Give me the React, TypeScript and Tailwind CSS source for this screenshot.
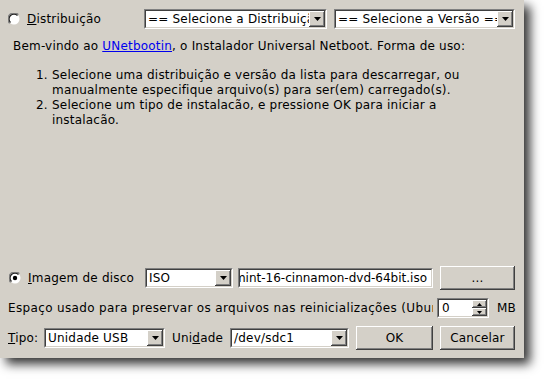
import React from 'react';

const sunken =
  'border border-t-[#808080] border-l-[#808080] border-b-white border-r-white';
const sunkenInner =
  'border border-t-[#404040] border-l-[#404040] border-b-[#d4d0c8] border-r-[#d4d0c8] bg-white';
const raised =
  'bg-[#d4d0c8] shadow-[inset_-1px_-1px_#404040,inset_1px_1px_#ffffff,inset_-2px_-2px_#808080]';

function Radio({ checked }: { checked?: boolean }) {
  return (
    <svg width="12" height="12" viewBox="0 0 12 12" className="shrink-0">
      <circle cx="6" cy="6" r="5.5" fill="#ffffff" />
      <path d="M1.6 10.4A6 6 0 0 1 10.4 1.6" stroke="#808080" strokeWidth="1.2" fill="none" />
      <path d="M2.5 9.5A4.8 4.8 0 0 1 9.5 2.5" stroke="#202020" strokeWidth="1.2" fill="none" />
      {checked && <circle cx="6" cy="6" r="2.2" fill="#000000" />}
    </svg>
  );
}

function Arrow() {
  return (
    <div className={`w-[16px] h-full flex items-center justify-center shrink-0 ${raised}`}>
      <svg width="7" height="4" viewBox="0 0 7 4">
        <path d="M0 0H7L3.5 4Z" fill="#000000" />
      </svg>
    </div>
  );
}

function Combo({ text, className }: { text: string; className: string }) {
  return (
    <div className={`${sunken} h-[20px] shrink-0 ${className}`}>
      <div className={`${sunkenInner} h-full flex items-stretch`}>
        <div className="flex-1 overflow-hidden whitespace-nowrap pl-[2px] leading-[16px]">{text}</div>
        <Arrow />
      </div>
    </div>
  );
}

function Button({ children, className }: { children: React.ReactNode; className: string }) {
  return (
    <div className={`${raised} flex items-center justify-center shrink-0 ${className}`}>{children}</div>
  );
}

export default function App() {
  return (
    <div className="w-[544px] h-[380px] bg-white overflow-hidden">
      <div
        className="w-[524px] h-[358px] bg-[#d4d0c8] shadow-[6px_6px_10px_rgba(0,0,0,0.8)] flex flex-col text-[12px] tracking-[0.2px] text-black pb-[8px]"
        style={{ fontFamily: '"DejaVu Sans", sans-serif' }}
      >
        <div className="flex items-center h-[20px] mt-[9px]">
          <div className="ml-[8px] flex items-center w-[136px]">
            <Radio />
            <span className="ml-[7px]">
              <span className="underline">D</span>istribuição
            </span>
          </div>
          <Combo text="== Selecione a Distribuição ==" className="w-[183px]" />
          <Combo text="== Selecione a Versão ==" className="w-[181px] ml-[7px]" />
        </div>

        <div className="mt-[10px] ml-[13px] leading-[15px]">
          Bem-vindo ao <span className="text-[#0000ee] underline">UNetbootin</span>, o Instalador
          Universal Netboot. Forma de uso:
        </div>

        <ol className="mt-[14px] ml-[36px] leading-[15px]">
          <li className="flex">
            <span className="w-[16px] shrink-0">1.</span>
            <span>
              Selecione uma distribuição e versão da lista para descarregar, ou
              <br />
              manualmente especifique arquivo(s) para ser(em) carregado(s).
            </span>
          </li>
          <li className="flex">
            <span className="w-[16px] shrink-0">2.</span>
            <span>
              Selecione um tipo de instalacão, e pressione OK para iniciar a
              <br />
              instalacão.
            </span>
          </li>
        </ol>

        <div className="flex-1" />

        <div className="flex items-center h-[24px]">
          <div className="ml-[9px] flex items-center w-[136px]">
            <Radio checked />
            <span className="ml-[7px]">
              <span className="underline">I</span>magem de disco
            </span>
          </div>
          <Combo text="ISO" className="w-[88px]" />
          <div className={`${sunken} h-[20px] w-[195px] ml-[5px]`}>
            <div className={`${sunkenInner} h-full flex justify-end overflow-hidden whitespace-nowrap leading-[16px] pr-[4px] tracking-normal`}>
              linuxmint-16-cinnamon-dvd-64bit.iso
            </div>
          </div>
          <Button className="w-[75px] h-[24px] ml-[7px]">...</Button>
        </div>

        <div className="flex items-center h-[20px] mt-[8px]">
          <div className="ml-[8px] w-[425px] mr-[4px] overflow-hidden whitespace-nowrap tracking-[0.35px]">
            Espaço usado para preservar os arquivos nas reinicializações (Ubuntu apenas):
          </div>
          <div className={`${sunken} h-[20px] w-[52px]`}>
            <div className={`${sunkenInner} h-full flex items-stretch`}>
              <div className="flex-1 pl-[3px] leading-[16px]">0</div>
              <div className="w-[15px] flex flex-col shrink-0">
                <div className={`${raised} flex-1 flex items-center justify-center`}>
                  <svg width="5" height="3" viewBox="0 0 5 3">
                    <path d="M0 3H5L2.5 0Z" fill="#000000" />
                  </svg>
                </div>
                <div className={`${raised} flex-1 flex items-center justify-center`}>
                  <svg width="5" height="3" viewBox="0 0 5 3">
                    <path d="M0 0H5L2.5 3Z" fill="#000000" />
                  </svg>
                </div>
              </div>
            </div>
          </div>
          <span className="ml-[8px]">MB</span>
        </div>

        <div className="flex items-center h-[24px] mt-[8px]">
          <span className="ml-[8px] w-[36px]">
            <span className="underline">T</span>ipo:
          </span>
          <Combo text="Unidade USB" className="w-[121px]" />
          <span className="ml-[7px] w-[58px]">
            Uni<span className="underline">d</span>ade
          </span>
          <Combo text="/dev/sdc1" className="w-[119px]" />
          <Button className="w-[77px] h-[24px] ml-[7px]">OK</Button>
          <Button className="w-[75px] h-[24px] ml-[7px]">Cancelar</Button>
        </div>
      </div>
    </div>
  );
}
